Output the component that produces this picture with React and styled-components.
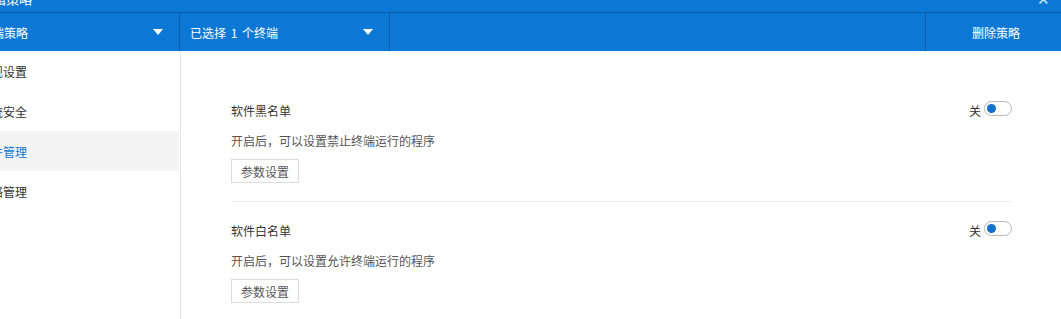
import React from "react";
import styled, { createGlobalStyle } from "styled-components";

const Global = createGlobalStyle`
  html, body { margin: 0; padding: 0; background: #fff; overflow: hidden; }
  body { font-family: "Microsoft YaHei", "Noto Sans CJK SC", "Noto Sans", sans-serif; }
`;

const BLUE = "#0b78d6";
const DARK = "#0a5caa";

const Dialog = styled.div`
  width: 1096px;
  margin: -23px 0 0 -30px;
  display: flex;
  flex-direction: column;
`;

const TitleBar = styled.div`
  flex-shrink: 0;
  height: 36px;
  box-sizing: border-box;
  padding: 8px 16px 0 10px;
  background: ${BLUE};
  border-bottom: 1px solid ${DARK};
  display: flex;
  align-items: center;
  justify-content: space-between;
  color: #fff;
  font-size: 13px;
`;

const Close = styled.span`
  font-size: 15px;
  color: #cfe6ff;
  line-height: 1;
`;

const Toolbar = styled.div`
  flex-shrink: 0;
  height: 38px;
  background: ${BLUE};
  display: flex;
  color: #fff;
  font-size: 12px;
`;

const Select = styled.div`
  width: 210px;
  box-sizing: border-box;
  padding: 0 16px 0 10px;
  display: flex;
  align-items: center;
  justify-content: space-between;
  border-right: 1px solid ${DARK};
  word-spacing: 2px;
`;

const Caret = styled.span`
  width: 0;
  height: 0;
  border-left: 5px solid transparent;
  border-right: 5px solid transparent;
  border-top: 6px solid #fff;
`;

const Spacer = styled.div`
  flex: 1;
  border-right: 1px solid ${DARK};
`;

const ActionCell = styled.div`
  width: 140px;
  display: flex;
  align-items: center;
  justify-content: center;
  color: #fff;
`;

const Body = styled.div`
  display: flex;
`;

const Sidebar = styled.div`
  width: 210px;
  flex-shrink: 0;
  border-right: 1px solid #e6e6e6;
  display: flex;
  flex-direction: column;
`;

const MenuItem = styled.div`
  height: 40px;
  display: flex;
  align-items: center;
  padding-left: 9px;
  font-size: 12px;
  color: ${(p) => (p.$active ? BLUE : "#333")};
  background: ${(p) => (p.$active ? "#f4f4f4" : "transparent")};
  margin-right: 1px;
`;

const Content = styled.div`
  flex: 1;
  padding: 31px 54px 0 50px;
`;

const Section = styled.div`
  padding: 18px 0;
  border-bottom: 1px solid ${(p) => (p.$last ? "transparent" : "#ececec")};
`;

const HeadRow = styled.div`
  display: flex;
  align-items: center;
  justify-content: space-between;
  height: 20px;
  font-size: 12px;
  color: #333;
`;

const SwitchWrap = styled.div`
  display: flex;
  align-items: center;
  gap: 3px;
  color: #333;
  font-size: 12px;
`;

const Toggle = styled.div`
  width: 28px;
  height: 15px;
  box-sizing: border-box;
  border: 1px solid #b8b8b8;
  border-radius: 8px;
  display: flex;
  align-items: center;
  padding-left: 2px;
  margin-bottom: 3px;
`;

const Knob = styled.span`
  width: 9px;
  height: 9px;
  border-radius: 50%;
  background: #1470c8;
`;

const Desc = styled.div`
  margin-top: 11px;
  line-height: 20px;
  font-size: 12px;
  color: #555;
`;

const Button = styled.button`
  margin-top: 8px;
  height: 24px;
  padding: 0 9px;
  border: 1px solid #dcdcdc;
  background: #fff;
  color: #555;
  font-family: inherit;
  font-size: 12px;
  display: block;
`;

const items = [
  { title: "软件黑名单", desc: "开启后，可以设置禁止终端运行的程序" },
  { title: "软件白名单", desc: "开启后，可以设置允许终端运行的程序" },
];

export default function App() {
  return (
    <>
      <Global />
      <Dialog>
        <TitleBar>
          <span>编辑策略</span>
          <Close>✕</Close>
        </TitleBar>
        <Toolbar>
          <Select>
            <span>终端策略</span>
            <Caret />
          </Select>
          <Select>
            <span>已选择 1 个终端</span>
            <Caret />
          </Select>
          <Spacer />
          <ActionCell>删除策略</ActionCell>
        </Toolbar>
        <Body>
          <Sidebar>
            <MenuItem>常规设置</MenuItem>
            <MenuItem>系统安全</MenuItem>
            <MenuItem $active>软件管理</MenuItem>
            <MenuItem>网络管理</MenuItem>
          </Sidebar>
          <Content>
            {items.map((it, i) => (
              <Section key={it.title} $last={i === items.length - 1}>
                <HeadRow>
                  <span>{it.title}</span>
                  <SwitchWrap>
                    关
                    <Toggle>
                      <Knob />
                    </Toggle>
                  </SwitchWrap>
                </HeadRow>
                <Desc>{it.desc}</Desc>
                <Button>参数设置</Button>
              </Section>
            ))}
          </Content>
        </Body>
      </Dialog>
    </>
  );
}
